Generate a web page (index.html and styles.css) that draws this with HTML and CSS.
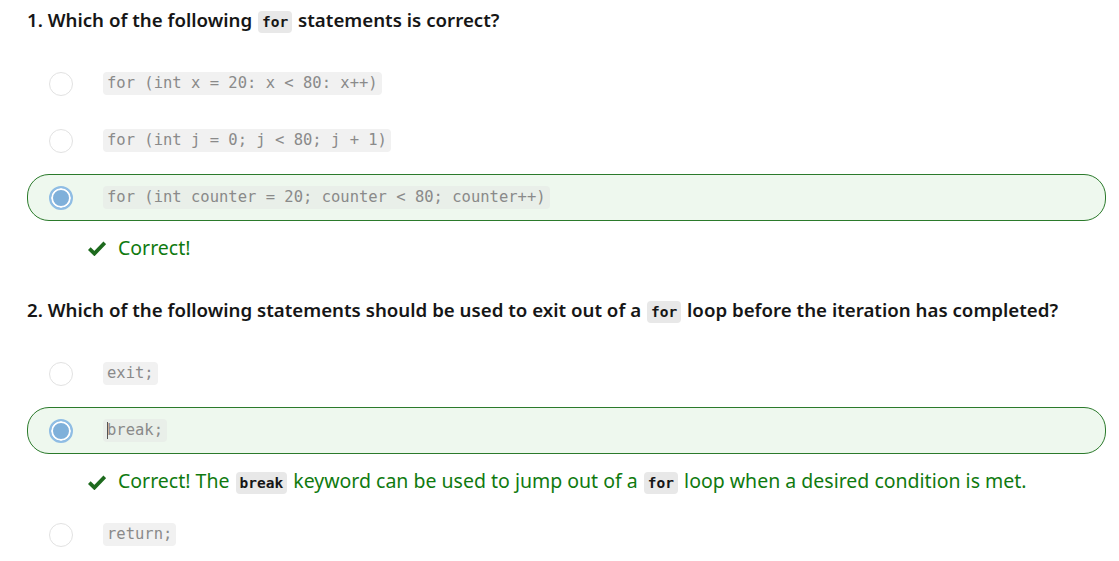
FILE: index.html
```html
<!DOCTYPE html>
<html>
<head>
<meta charset="utf-8">
<link rel="stylesheet" href="styles.css">
</head>
<body>
<div class="quiz">
  <section class="question">
    <h2 class="q-title">1. Which of the following <code class="kw">for</code> statements is correct?</h2>
    <div class="option"><span class="radio"></span><code class="ans">for (int x = 20: x &lt; 80: x++)</code></div>
    <div class="option"><span class="radio"></span><code class="ans">for (int j = 0; j &lt; 80; j + 1)</code></div>
    <div class="option selected"><span class="radio"></span><code class="ans">for (int counter = 20; counter &lt; 80; counter++)</code></div>
    <p class="feedback"><svg class="check" width="18" height="15" viewBox="0 0 18 15"><path d="M1.3 7.6 L6.4 12.6 L16.8 1.8" fill="none" stroke="#1d6a1d" stroke-width="3.8"/></svg><span>Correct!</span></p>
  </section>
  <section class="question">
    <h2 class="q-title">2. Which of the following statements should be used to exit out of a <code class="kw">for</code> loop before the iteration has completed?</h2>
    <div class="option"><span class="radio"></span><code class="ans">exit;</code></div>
    <div class="option selected"><span class="radio"></span><code class="ans"><span class="caret"></span>break;</code></div>
    <p class="feedback"><svg class="check" width="18" height="15" viewBox="0 0 18 15"><path d="M1.3 7.6 L6.4 12.6 L16.8 1.8" fill="none" stroke="#1d6a1d" stroke-width="3.8"/></svg><span>Correct! The <code class="kw">break</code> keyword can be used to jump out of a <code class="kw">for</code> loop when a desired condition is met.</span></p>
    <div class="option"><span class="radio"></span><code class="ans">return;</code></div>
  </section>
</div>
</body>
</html>
```
FILE: styles.css
```css
html, body {
  margin: 0;
  padding: 0;
  background: #ffffff;
}
body {
  font-family: "Noto Sans", "Open Sans", sans-serif;
  color: #1b1b1b;
}
.quiz {
  padding: 7px 13px 0 27px;
}
.question + .question {
  margin-top: 36px;
}
.q-title {
  margin: 0 0 25px 0;
  font-size: 18.7px;
  font-weight: 600;
  line-height: 26px;
  color: #161616;
  white-space: nowrap;
}
.kw {
  font-family: "DejaVu Sans Mono", monospace;
  font-weight: bold;
  font-size: 14.5px;
  background: #e8e8e8;
  color: #161616;
  padding: 3px 4px;
  border-radius: 4px;
  margin: 0 1px;
}
.option {
  display: flex;
  align-items: center;
  height: 45px;
  border: 1px solid transparent;
  border-radius: 22px;
  padding-left: 21px;
  margin-bottom: 10px;
}
.option.selected {
  border-color: #2b7a2b;
  background: #eef8ee;
}
.radio {
  box-sizing: border-box;
  width: 24px;
  height: 24px;
  border-radius: 50%;
  border: 1px solid #e2e2e2;
  background: #fff;
  margin-right: 30px;
  flex: none;
}
.selected .radio {
  border: 2px solid #8fbde4;
  background: #7fb0da;
  box-shadow: inset 0 0 0 2px #ffffff;
}
.ans {
  position: relative;
  font-family: "DejaVu Sans Mono", monospace;
  font-size: 15.5px;
  line-height: 23px;
  color: #8a8a8a;
  background: #f1f1f1;
  padding: 0 4px;
  border-radius: 4px;
  white-space: pre;
}
.selected .ans {
  background: #e9efe9;
}
.caret {
  position: absolute;
  left: 4px;
  top: 3px;
  width: 1px;
  height: 17px;
  background: #555;
}
.feedback {
  display: flex;
  align-items: center;
  margin: 14px 0 15px 0;
  padding-left: 61px;
  font-size: 19.5px;
  line-height: 26px;
  color: #0f7a0f;
  white-space: nowrap;
}
.check {
  flex: none;
  margin-right: 12px;
  margin-top: 1px;
}
.feedback .kw {
  color: #161616;
}
```
